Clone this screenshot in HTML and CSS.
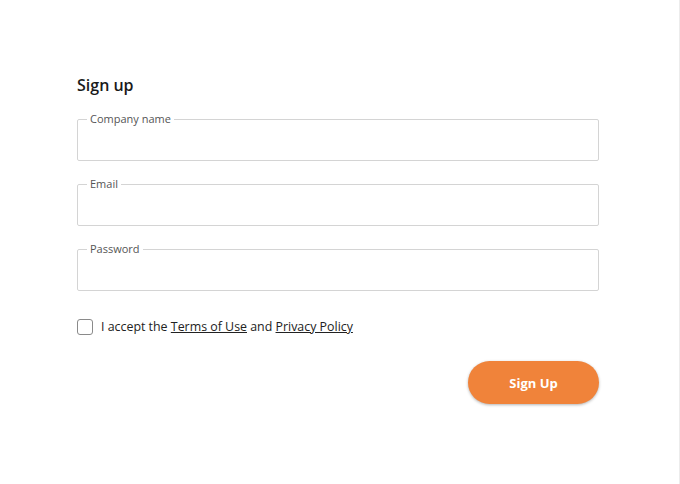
FILE: index.html
```html
<!DOCTYPE html>
<html>
<head>
<meta charset="utf-8">
<link rel="stylesheet" href="styles.css">
</head>
<body>
<div class="page">
  <form class="signup">
    <h1 class="title">Sign up</h1>
    <fieldset class="field">
      <legend class="field-label">Company name</legend>
      <input class="field-input" type="text">
    </fieldset>
    <fieldset class="field">
      <legend class="field-label">Email</legend>
      <input class="field-input" type="email">
    </fieldset>
    <fieldset class="field">
      <legend class="field-label">Password</legend>
      <input class="field-input" type="password">
    </fieldset>
    <label class="terms">
      <span class="checkbox"></span>
      <span class="terms-text">I accept the <a href="#" class="link">Terms of Use</a> and <a href="#" class="link">Privacy Policy</a></span>
    </label>
    <div class="actions">
      <button type="button" class="submit">Sign Up</button>
    </div>
  </form>
</div>
</body>
</html>
```

FILE: styles.css
```css
html, body {
  margin: 0;
  padding: 0;
  background: #fff;
}
body {
  font-family: "Open Sans", "Noto Sans", sans-serif;
  color: #222;
}
.page {
  width: 679px;
  height: 484px;
  border-right: 1px solid #ececec;
  box-sizing: content-box;
}
.signup {
  display: flex;
  flex-direction: column;
  width: 522px;
  padding: 74px 0 0 77px;
}
.title {
  margin: 0 0 16px;
  font-size: 16px;
  line-height: 22px;
  font-weight: 600;
  color: #1a1a1a;
}
.field {
  margin: 0 0 16px;
  padding: 0 9px;
  border: 1px solid #d4d4d4;
  border-radius: 2px;
  min-width: 0;
}
.field-label {
  padding: 0 3px;
  font-size: 11px;
  line-height: 14px;
  color: #555;
}
.field-input {
  display: block;
  width: 100%;
  height: 34px;
  border: 0;
  padding: 0;
  outline: none;
  background: transparent;
  font: inherit;
}
.terms {
  display: flex;
  align-items: center;
  gap: 8px;
  margin-top: 11px;
  font-size: 12.4px;
  line-height: 18px;
  color: #222;
}
.checkbox {
  width: 14px;
  height: 14px;
  border: 1px solid #8a8a8a;
  border-radius: 3px;
  flex: none;
}
.link {
  color: #222;
  text-decoration: underline;
}
.actions {
  display: flex;
  justify-content: flex-end;
  margin-top: 25px;
}
.submit {
  width: 131px;
  height: 43px;
  border: 0;
  border-radius: 22px;
  background: #f0833a;
  color: #fff;
  font-family: inherit;
  font-size: 13px;
  font-weight: 700;
  box-shadow: 0 1px 3px rgba(0,0,0,0.3);
}
```
